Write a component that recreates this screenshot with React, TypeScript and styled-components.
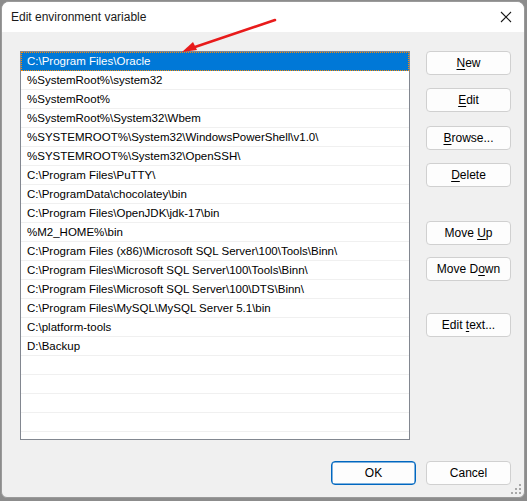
import React from 'react';
import styled, { createGlobalStyle } from 'styled-components';

const GlobalStyle = createGlobalStyle`
  html, body {
    margin: 0;
    padding: 0;
    background: #8c8c8c;
  }
  body {
    font-family: "Segoe UI", "Liberation Sans", Arial, sans-serif;
    font-size: 12px;
    color: #000;
  }
`;

const Window = styled.div`
  position: relative;
  width: 524px;
  height: 497px;
  margin: 1px 0 0 1px;
  background: #f0f0f0;
  border: 1px solid #9a9a9a;
  border-radius: 8px 8px 6px 6px;
  box-sizing: border-box;
  overflow: hidden;
  display: flex;
  flex-direction: column;
`;

const TitleBar = styled.div`
  height: 30px;
  flex: none;
  background: #ffffff;
  display: flex;
  align-items: center;
  justify-content: space-between;
  padding: 0 10px 0 9px;
`;

const Title = styled.span`
  font-size: 12px;
  color: #1a1a1a;
`;

const CloseBtn = styled.div`
  width: 16px;
  height: 16px;
  display: flex;
  align-items: center;
  justify-content: center;
`;

const Body = styled.div`
  flex: 1;
  display: flex;
  flex-direction: column;
  padding: 19px 13px 12px 18px;
`;

const Main = styled.div`
  display: flex;
  gap: 16px;
`;

const List = styled.div`
  width: 391px;
  height: 389px;
  box-sizing: border-box;
  border: 1px solid #828790;
  background: #ffffff;
  overflow: hidden;
`;

const Row = styled.div<{ $selected?: boolean }>`
  height: 19px;
  box-sizing: border-box;
  border-bottom: 1px solid ${(p) => (p.$selected ? '#0078d7' : '#f0f0f0')};
  background: ${(p) => (p.$selected ? '#0078d7' : '#ffffff')};
  color: ${(p) => (p.$selected ? '#ffffff' : '#000000')};
  outline: ${(p) => (p.$selected ? '1px dotted #ff8a00' : 'none')};
  outline-offset: -1px;
  padding-left: 6px;
  line-height: 18px;
  white-space: nowrap;
  font-size: 11.5px;
`;

const Buttons = styled.div`
  display: flex;
  flex-direction: column;
`;

const Button = styled.button<{ $top?: number; $default?: boolean }>`
  width: 85px;
  height: 24px;
  margin-top: ${(p) => p.$top ?? 0}px;
  box-sizing: border-box;
  background: #fdfdfd;
  border: 1px solid ${(p) => (p.$default ? '#0067c0' : '#d0d0d0')};
  box-shadow: ${(p) => (p.$default ? 'inset 0 0 0 0.5px #0067c0' : 'none')};
  border-radius: 4px;
  font-family: inherit;
  font-size: 12px;
  color: #000;
  padding: 0;
  cursor: default;

  u {
    text-decoration: underline;
    text-underline-offset: 2px;
  }
`;

const Footer = styled.div`
  margin-top: auto;
  display: flex;
  justify-content: flex-end;
  gap: 10px;
`;

const Grip = styled.svg`
  position: absolute;
  right: 2px;
  bottom: 2px;
`;

const Arrow = styled.svg`
  position: absolute;
  left: 0;
  top: 0;
  pointer-events: none;
`;

const paths = [
  'C:\\Program Files\\Oracle',
  '%SystemRoot%\\system32',
  '%SystemRoot%',
  '%SystemRoot%\\System32\\Wbem',
  '%SYSTEMROOT%\\System32\\WindowsPowerShell\\v1.0\\',
  '%SYSTEMROOT%\\System32\\OpenSSH\\',
  'C:\\Program Files\\PuTTY\\',
  'C:\\ProgramData\\chocolatey\\bin',
  'C:\\Program Files\\OpenJDK\\jdk-17\\bin',
  '%M2_HOME%\\bin',
  'C:\\Program Files (x86)\\Microsoft SQL Server\\100\\Tools\\Binn\\',
  'C:\\Program Files\\Microsoft SQL Server\\100\\Tools\\Binn\\',
  'C:\\Program Files\\Microsoft SQL Server\\100\\DTS\\Binn\\',
  'C:\\Program Files\\MySQL\\MySQL Server 5.1\\bin',
  'C:\\platform-tools',
  'D:\\Backup',
  '',
  '',
  '',
  '',
  '',
];

const App: React.FC = () => {
  return (
    <>
      <GlobalStyle />
      <Window>
        <TitleBar>
          <Title>Edit environment variable</Title>
          <CloseBtn>
            <svg width="12" height="12" viewBox="0 0 12 12">
              <path d="M1 1 L11 11 M11 1 L1 11" stroke="#1a1a1a" strokeWidth="1.1" />
            </svg>
          </CloseBtn>
        </TitleBar>
        <Body>
          <Main>
            <List>
              {paths.map((p, i) => (
                <Row key={i} $selected={i === 0}>
                  {p}
                </Row>
              ))}
            </List>
            <Buttons>
              <Button>
                <u>N</u>ew
              </Button>
              <Button $top={13}>
                <u>E</u>dit
              </Button>
              <Button $top={14}>
                <u>B</u>rowse...
              </Button>
              <Button $top={13}>
                <u>D</u>elete
              </Button>
              <Button $top={34}>
                Move <u>U</u>p
              </Button>
              <Button $top={12}>
                Move D<u>o</u>wn
              </Button>
              <Button $top={32}>
                Edit <u>t</u>ext...
              </Button>
            </Buttons>
          </Main>
          <Footer>
            <Button $default>OK</Button>
            <Button>Cancel</Button>
          </Footer>
        </Body>
        <Grip width="12" height="12" viewBox="0 0 12 12">
          {[
            [9, 1],
            [9, 5],
            [5, 5],
            [9, 9],
            [5, 9],
            [1, 9],
          ].map(([x, y], i) => (
            <rect key={i} x={x} y={y} width="2" height="2" fill="#a8a8a8" />
          ))}
        </Grip>
      </Window>
      <Arrow width="527" height="501" viewBox="0 0 527 501">
        <line x1="275" y1="20" x2="192" y2="48" stroke="#e81b1b" strokeWidth="2.5" strokeLinecap="round" />
        <path d="M182 52 L193 42 L197 50 Z" fill="#e81b1b" />
      </Arrow>
    </>
  );
};

export default App;
